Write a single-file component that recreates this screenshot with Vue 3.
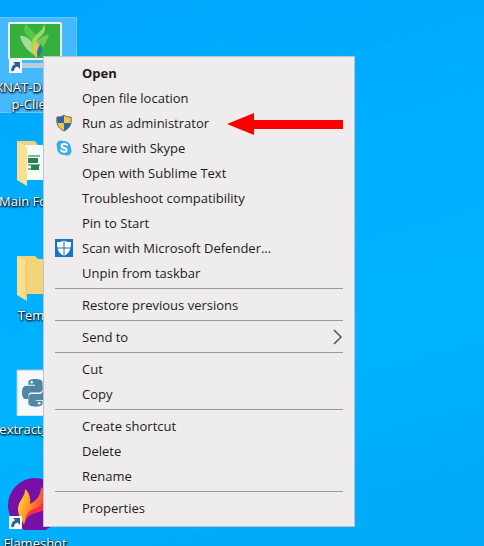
<script setup>
const groups = [
  [
    { label: 'Open', bold: true },
    { label: 'Open file location' },
    { label: 'Run as administrator', icon: 'shield' },
    { label: 'Share with Skype', icon: 'skype' },
    { label: 'Open with Sublime Text' },
    { label: 'Troubleshoot compatibility' },
    { label: 'Pin to Start' },
    { label: 'Scan with Microsoft Defender...', icon: 'defender' },
    { label: 'Unpin from taskbar' },
  ],
  [{ label: 'Restore previous versions' }],
  [{ label: 'Send to', submenu: true }],
  [{ label: 'Cut' }, { label: 'Copy' }],
  [{ label: 'Create shortcut' }, { label: 'Delete' }, { label: 'Rename' }],
  [{ label: 'Properties' }],
]

const shortcuts = [
  { lines: ['XNAT-Deskto', 'p-Client'], icon: 'monitor', selected: true, linked: true },
  { lines: ['Main Folder'], icon: 'files' },
  { lines: ['Temp'], icon: 'folder' },
  { lines: ['extract_info'], icon: 'python' },
  { lines: ['Flameshot'], icon: 'flame', linked: true },
]
</script>

<template>
  <main class="desktop">
    <div class="shortcuts">
      <button
        v-for="s in shortcuts"
        :key="s.icon"
        type="button"
        class="shortcut"
        :class="{ selected: s.selected }"
      >
        <svg class="picture" viewBox="0 0 54 54" aria-hidden="true">
          <g v-if="s.icon === 'monitor'">
            <rect x="0" y="2" width="54" height="38" rx="2" fill="#e9f5ec" />
            <rect x="2" y="4" width="50" height="34" fill="#35b03c" />
            <path d="M18 4c-4 5-1 10 4 14 4 4 6 9 6 17 4-7 4-14 1-19-3-4-7-7-11-12z" fill="#5cc548" />
            <path d="M12 16c7-1 15 5 16 20-5-3-13-8-16-20z" fill="#a5dc96" />
            <path d="M36 4c3 7-1 11-6 15-3 4-4 9-2 17-6-7-6-15-1-20 4-4 8-6 9-12z" fill="#9ad862" />
            <path d="M41 14c-6 2-12 5-13 12v10c4-7 10-10 13-22z" fill="#6dcc58" />
            <path d="M28 21c4 3 4 11 0 17-4-5-4-12 0-17z" fill="#efc445" />
            <path d="M33 24c2 5 1 10-3 13-2-4-1-9 3-13z" fill="#2679ac" />
            <rect x="14" y="43" width="40" height="5" fill="#b9cfdc" />
          </g>
          <g v-else-if="s.icon === 'files'">
            <path d="M9 7h18l3 4h20v35H12z" fill="#f0d27b" />
            <path d="M17 11h23l8 8v27H17z" fill="#f7fbf8" />
            <path d="M20 22h12M20 26h10M20 31h12M20 35h9" stroke="#80b99a" stroke-width="2" />
            <path d="M20 24h10v5H20zM23 31h8v5h-8z" fill="#218551" />
            <path d="M9 7l10 6v39L9 46z" fill="#fbe094" />
          </g>
          <g v-else-if="s.icon === 'folder'">
            <path d="M9 8h18l3 3h20v35H12z" fill="#f4d479" />
            <path d="M9 8l10 5v40L9 47z" fill="#fbdf8b" />
            <path d="M19 13l-1 5v34" fill="none" stroke="#e5bf5c" />
          </g>
          <g v-else-if="s.icon === 'python'">
            <path d="M9 8h28l9 9v37H9z" fill="#f5f9fb" stroke="#b5c8d2" />
            <g transform="translate(1 1) scale(.84)">
              <path d="M23 26v-3c0-3 3-4 8-4s9 1 9 4v8c0 3-2 4-5 4h-8c-3 0-4 2-4 4v4h-3c-6 0-6-16 0-16h11v-1z" fill="#4c88a5" />
              <path d="M40 28h3c6 1 6 15 0 16H32v1h8v3c0 3-4 4-8 4s-9-1-9-4v-7c0-3 2-4 4-4h9c3 0 4-2 4-4z" fill="#5288a1" />
              <circle cx="27" cy="23" r="1.500" fill="#fff" />
              <circle cx="36" cy="48" r="1.500" fill="#fff" />
            </g>
          </g>
          <g v-else>
            <defs>
              <linearGradient id="flame-fill" x1="0" y1="0" x2="1" y2=".3">
                <stop offset=".15" stop-color="#ffc93a" />
                <stop offset=".5" stop-color="#ff8b24" />
                <stop offset="1" stop-color="#fb2f45" />
              </linearGradient>
            </defs>
            <circle cx="27" cy="29" r="27" fill="#7710a7" />
            <path d="M17 13c1 7-7 12-7 20 0 7 4 10 6 16 2-9 6-11 14-13 12-3 15-12 3-25 0 9-5 14-11 17 1-6-1-12-5-15z" fill="url(#flame-fill)" />
            <path d="M17 46c0-7 4-12 11-14 5-2 8-5 9-11 5 8 1 13-7 15-8 2-11 4-13 10z" fill="#f92d4b" />
          </g>
          <g v-if="s.linked">
            <rect x="1" y="40" width="13" height="13" fill="#f5fafc" />
            <path d="M5 42h7v7z" fill="#2c6096" />
            <path d="M5 51c-1-3 1-5 4-6" fill="none" stroke="#2c6096" stroke-width="3" />
          </g>
        </svg>
        <span class="caption">
          <span v-for="line in s.lines" :key="line">{{ line }}</span>
        </span>
      </button>
    </div>

    <div class="menu" role="menu" aria-label="File actions">
      <div v-for="(group, i) in groups" :key="i" class="group" role="group">
        <button
          v-for="item in group"
          :key="item.label"
          type="button"
          role="menuitem"
          class="item"
          :class="{ bold: item.bold }"
        >
          <span class="glyph">
            <svg v-if="item.icon === 'shield'" width="18" height="18" viewBox="0 0 18 18" aria-hidden="true">
              <path d="M9 1c2 2 5 2 7 2 1 7-1 11-7 14C3 14 1 10 2 3c2 0 5 0 7-2z" fill="#f6c442" />
              <path d="M9 1C7 3 4 3 2 3c0 2 0 4 .3 6H9zM9 9h6.700c-.7 4-2.700 6-6.700 8z" fill="#2869a8" />
              <path d="M9 1c2 2 5 2 7 2 1 7-1 11-7 14C3 14 1 10 2 3c2 0 5 0 7-2z" fill="none" stroke="#5d6472" />
            </svg>
            <svg v-else-if="item.icon === 'skype'" width="18" height="18" viewBox="0 0 18 18" aria-hidden="true">
              <circle cx="9" cy="9" r="7" fill="#35aeea" />
              <circle cx="6" cy="6" r="4.500" fill="#35aeea" />
              <circle cx="12" cy="12" r="4.500" fill="#35aeea" />
              <path d="M12 6C11 4.500 6.500 4.400 6.500 7c0 2.500 5.200 1.400 5.200 4 0 2.500-5 2.200-5.700.2" fill="none" stroke="#fff" stroke-width="2" stroke-linecap="round" />
            </svg>
            <svg v-else-if="item.icon === 'defender'" width="18" height="18" viewBox="0 0 18 18" aria-hidden="true">
              <rect width="18" height="18" fill="#1673c5" />
              <path d="M9 1c2 2 4 2 7 2 0 7-1 11-7 14C3 14 2 10 2 3c3 0 5 0 7-2z" fill="#fff" />
              <path d="M9 1v16M1 9h16" stroke="#1673c5" />
            </svg>
          </span>
          <span class="label">{{ item.label }}</span>
          <svg v-if="item.submenu" class="chevron" width="10" height="16" viewBox="0 0 10 16" aria-hidden="true">
            <path d="M1 1l7 7-7 7" fill="none" stroke="#555" stroke-width="1.500" />
          </svg>
        </button>
      </div>

      <svg class="pointer" viewBox="0 0 116 24" aria-hidden="true">
        <path d="M0 12L27 1v7h89v9H27v6z" fill="#fb0000" />
      </svg>
    </div>
  </main>
</template>

<style>
body {
  margin: 0;
}
</style>

<style scoped>
.desktop {
  position: relative;
  height: 100vh;
  overflow: hidden;
  box-sizing: border-box;
  padding-top: 17px;
  background: linear-gradient(165deg, #00a5fb 0%, #00aeff 30%, #00b4ff 65%, #00a8f6 100%);
  font-family: "Open Sans", "Noto Sans", sans-serif;
  font-size: 13px;
}

button {
  margin: 0;
  border: 0;
  background: none;
  font: inherit;
}

.shortcuts {
  display: grid;
  grid-auto-rows: 114px;
  align-items: start;
  width: 84px;
  margin-left: -7px;
}

.shortcut {
  display: flex;
  flex-direction: column;
  align-items: center;
  gap: 5px;
  padding: 3px 0 0;
  color: #fff;
}

.selected {
  background: #45b9fb;
  box-shadow: inset 0 0 0 1px #68c4fa;
}

.picture {
  width: 54px;
  height: 54px;
}

.caption {
  display: flex;
  flex-direction: column;
  align-items: center;
  line-height: 17px;
  white-space: nowrap;
  text-shadow: 0 1px 2px #000, 1px 1px 2px #000;
}

.menu {
  position: absolute;
  top: 56px;
  left: 43px;
  width: 312px;
  box-sizing: border-box;
  padding: 3px 0 6px;
  border: 1px solid #b8c4ca;
  background: #eeecec;
}

.group + .group::before {
  content: "";
  display: block;
  margin: 3px 11px;
  border-top: 1px solid #999;
}

.item {
  display: flex;
  align-items: center;
  gap: 9px;
  width: 100%;
  height: 25px;
  padding: 0 11px;
  color: #1c1c1c;
  text-align: left;
}

.bold {
  font-weight: 700;
}

.glyph {
  display: flex;
  width: 18px;
}

.label {
  flex: 1;
}

.pointer {
  position: absolute;
  top: 55px;
  right: 11px;
  width: 116px;
  height: 24px;
}
</style>
